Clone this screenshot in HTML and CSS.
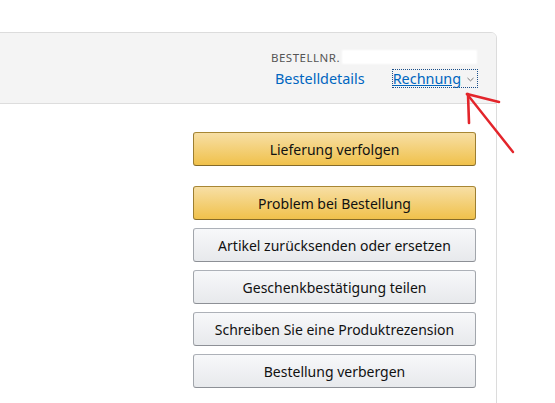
FILE: index.html
```html
<!DOCTYPE html>
<html lang="de">
<head>
<meta charset="utf-8">
<link rel="stylesheet" href="styles.css">
</head>
<body>
<div class="page">
  <div class="card">
    <div class="card-head">
      <div class="order-meta">
        <div class="order-nr"><span class="label">BESTELLNR.</span><span class="redact"></span></div>
        <div class="order-links">
          <a class="link" href="#">Bestelldetails</a>
          <span class="sep"></span>
          <a class="link invoice" href="#">Rechnung <span class="chev"><svg width="7" height="5" viewBox="0 0 7 5"><path d="M0.5 1 L3.5 3.8 L6.5 1" fill="none" stroke="#777" stroke-width="1"/></svg></span></a>
        </div>
      </div>
    </div>
    <div class="card-body">
      <div class="actions">
        <button class="btn yellow">Lieferung verfolgen</button>
        <div class="group">
          <button class="btn yellow">Problem bei Bestellung</button>
          <button class="btn gray">Artikel zurücksenden oder ersetzen</button>
          <button class="btn gray">Geschenkbestätigung teilen</button>
          <button class="btn gray">Schreiben Sie eine Produktrezension</button>
          <button class="btn gray">Bestellung verbergen</button>
        </div>
      </div>
    </div>
  </div>
  <svg class="arrow" width="60" height="70" viewBox="0 0 60 70">
    <path d="M6 5 L52 63" stroke="#e3252b" stroke-width="2.4" fill="none" stroke-linecap="round"/>
    <path d="M6 5 L38 13" stroke="#e3252b" stroke-width="2.6" fill="none" stroke-linecap="round"/>
    <path d="M7 5 L8 34" stroke="#e3252b" stroke-width="2.6" fill="none" stroke-linecap="round"/>
  </svg>
</div>
</body>
</html>
```

FILE: styles.css
```css
html, body {
  margin: 0;
  padding: 0;
  background: #fff;
}
body {
  font-family: "Noto Sans", "Open Sans", sans-serif;
  color: #111;
  overflow: hidden;
}
.page {
  position: relative;
  width: 555px;
  height: 403px;
  padding-top: 32px;
  box-sizing: border-box;
  overflow: hidden;
}
.card {
  margin-left: -10px;
  width: 507px;
  height: 380px;
  border: 1px solid #dcdcdc;
  border-radius: 6px;
  box-sizing: border-box;
  overflow: hidden;
}
.card-head {
  background: #f4f4f4;
  border-bottom: 1px solid #dddddd;
  height: 71px;
  box-sizing: border-box;
  display: flex;
  justify-content: flex-end;
  padding: 17px 20px 0 0;
}
.order-meta {
  display: flex;
  flex-direction: column;
  width: 205px;
}
.order-nr {
  display: flex;
  align-items: center;
  height: 14px;
}
.label {
  font-size: 11.5px;
  color: #555;
  letter-spacing: 0.5px;
}
.redact {
  display: inline-block;
  width: 138px;
  height: 12px;
  margin-left: 3px;
  background: #fff;
  box-shadow: 0 0 2px 1px #fff;
}
.order-links {
  display: flex;
  align-items: center;
  margin-top: 6px;
  padding-left: 4px;
}
.link {
  font-size: 14.4px;
  color: #0066c0;
  text-decoration: none;
  line-height: 17px;
}
.sep {
  width: 1px;
  height: 16px;
  background: #ddd;
  margin: 0 14px;
}
.invoice {
  outline: 1px dotted #1a4f8a;
  outline-offset: 0;
  padding: 0 3px 0 0;
  display: inline-flex;
  align-items: center;
  text-decoration: underline;
  text-decoration-color: #0066c0;
}
.chev {
  display: inline-flex;
  margin-left: 6px;
  margin-top: 2px;
}
.card-body {
  display: flex;
  justify-content: flex-end;
  padding: 28px 20px 0 0;
}
.actions {
  width: 283px;
  display: flex;
  flex-direction: column;
  gap: 20px;
}
.group {
  display: flex;
  flex-direction: column;
  gap: 8px;
}
.btn {
  display: block;
  width: 283px;
  height: 34px;
  border-radius: 3px;
  border: 1px solid;
  font-family: "Noto Sans", "Open Sans", sans-serif;
  font-size: 14px;
  color: #111;
  padding: 0;
  box-sizing: border-box;
}
.yellow {
  background: linear-gradient(to bottom, #f7dfa5, #f0c14b);
  border-color: #a88734 #9c7e31 #846a29;
}
.gray {
  background: linear-gradient(to bottom, #f7f8fa, #e7e9ec);
  border-color: #adb1b8 #a2a6ac #8d9096;
}
.arrow {
  position: absolute;
  left: 461px;
  top: 89px;
}
```
